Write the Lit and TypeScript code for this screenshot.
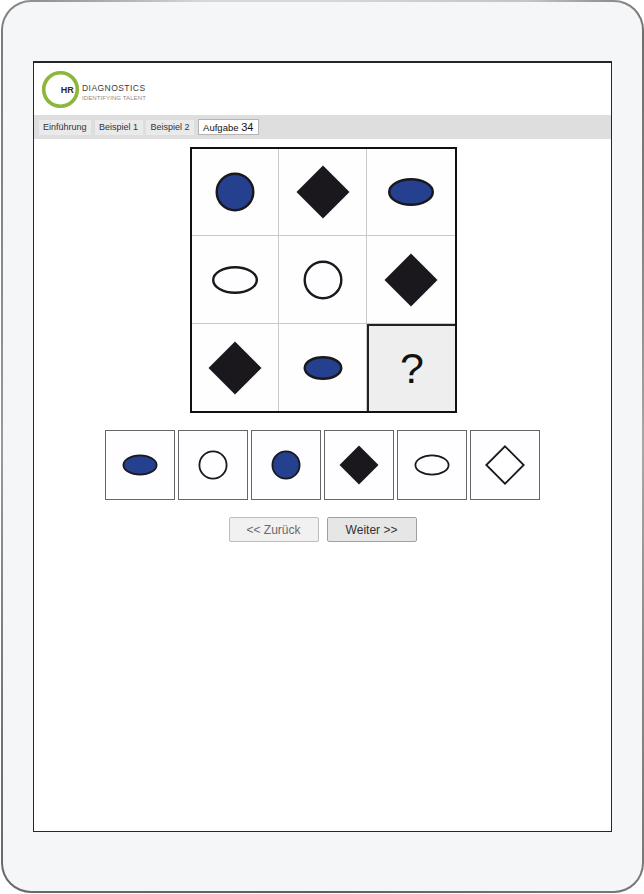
import { LitElement, html, svg, css } from "lit";
import { customElement } from "lit/decorators.js";

type Kind = "circle" | "ellipse" | "diamond";
interface Shape { kind: Kind; fill: string; a: number; b?: number; sw?: number }

const BLUE = "#24408f";
const INK = "#1a181c";
const PAPER = "#fefdff";

const draw = (s: Shape, size: number) => {
  const c = size / 2;
  const sw = s.sw ?? 2.4;
  if (s.kind === "circle")
    return svg`<circle cx=${c} cy=${c} r=${s.a - sw / 2} fill=${s.fill} stroke=${INK} stroke-width=${sw}></circle>`;
  if (s.kind === "ellipse")
    return svg`<ellipse cx=${c} cy=${c} rx=${s.a - sw / 2} ry=${(s.b ?? s.a) - sw / 2} fill=${s.fill} stroke=${INK} stroke-width=${sw}></ellipse>`;
  const h = s.a - (s.fill === INK ? 0 : sw / 1.4);
  return svg`<polygon points="${c},${c - h} ${c + h},${c} ${c},${c + h} ${c - h},${c}" fill=${s.fill} stroke=${s.fill === INK ? "none" : INK} stroke-width=${sw}></polygon>`;
};

const MATRIX: Shape[] = [
  { kind: "circle", fill: BLUE, a: 19.5 },
  { kind: "diamond", fill: INK, a: 26.5 },
  { kind: "ellipse", fill: BLUE, a: 23, b: 14 },
  { kind: "ellipse", fill: PAPER, a: 23, b: 14 },
  { kind: "circle", fill: PAPER, a: 19.5 },
  { kind: "diamond", fill: INK, a: 26.5 },
  { kind: "diamond", fill: INK, a: 26.5 },
  { kind: "ellipse", fill: BLUE, a: 19.5, b: 12 },
];

const OPTIONS: Shape[] = [
  { kind: "ellipse", fill: BLUE, a: 17.5, b: 10.5, sw: 1.8 },
  { kind: "circle", fill: PAPER, a: 14.5, sw: 1.8 },
  { kind: "circle", fill: BLUE, a: 14.5, sw: 1.8 },
  { kind: "diamond", fill: INK, a: 19.5 },
  { kind: "ellipse", fill: PAPER, a: 17.5, b: 10.5, sw: 1.8 },
  { kind: "diamond", fill: "#ffffff", a: 20, sw: 1.8 },
];

@customElement("app-root")
export class AppRoot extends LitElement {
  static styles = css`
    :host {
      display: block;
      width: 644px;
      height: 894px;
      background: #fff;
      font-family: "Liberation Sans", Arial, sans-serif;
    }
    * { box-sizing: border-box; }
    .tablet {
      width: 643px;
      height: 893px;
      margin-left: 1px;
      padding: 59px 0 0 30px;
      border: 2px solid transparent;
      border-radius: 30px;
      background:
        linear-gradient(#f5f6f8, #f5f6f8) padding-box,
        conic-gradient(#d8d8d8 0deg, #c4c4c4 25deg, #6f6f6f 38deg, #a8a8a8 90deg, #7a7a7a 142deg, #5f5f5f 180deg, #6a6a6a 218deg, #9a9a9a 270deg, #7c7c7c 322deg, #d8d8d8 345deg) border-box;
    }
    .screen {
      width: 579px;
      height: 771px;
      background: #fff;
      border: 1px solid #24282b;
      border-top-width: 2px;
      display: flex;
      flex-direction: column;
    }
    .header {
      height: 52px;
      padding: 7px 0 0 7px;
      display: flex;
      align-items: flex-start;
      flex: none;
    }
    .logo-ring { display: block; flex: none; }
    .hr { font-size: 9px; font-weight: 700; fill: #2b2b2b; }
    .logo-text {
      margin: 13px 0 0 2px;
      display: flex;
      flex-direction: column;
    }
    .brand {
      font-size: 8.5px;
      line-height: 11px;
      letter-spacing: 0.45px;
      color: #3a3a3a;
    }
    .tag {
      font-size: 6px;
      line-height: 9px;
      letter-spacing: 0.1px;
      color: #8c8c8c;
    }
    .tabs {
      height: 24px;
      flex: none;
      background: #dedede;
      display: flex;
      align-items: flex-start;
      gap: 3.5px;
      padding: 5px 0 0 4.5px;
    }
    .tab {
      height: 15px;
      padding: 0 4.5px;
      font-size: 9px;
      line-height: 15px;
      color: #333;
      background: #eaeaea;
      white-space: nowrap;
    }
    .tab.active {
      height: 16px;
      margin-top: -1px;
      background: #fff;
      border: 1px solid #b5b5b5;
      font-size: 9.5px;
      color: #111;
      line-height: 15px;
    }
    .tab .num { font-size: 11px; }
    .content {
      display: flex;
      flex-direction: column;
      align-items: center;
      padding-top: 8px;
    }
    .matrix {
      width: 267px;
      height: 266px;
      margin-left: 2px;
      border: 2px solid #111;
      display: grid;
      grid-template-columns: 87px 88px 88px;
      grid-template-rows: 87px 88px 87px;
      background: #fff;
    }
    .cell {
      display: flex;
      align-items: center;
      justify-content: center;
      border-right: 1px solid #c9c9c9;
      border-bottom: 1px solid #c9c9c9;
      background: #fefefe;
    }
    .cell:nth-child(3n) { border-right: 0; }
    .cell:nth-child(n + 7) { border-bottom: 0; }
    .cell svg { display: block; flex: none; }
    .unknown {
      background: #eeeeee;
      border: 2px solid #222;
      font-size: 43px;
      line-height: 1;
      color: #111;
    }
    .options {
      display: flex;
      gap: 3px;
      margin-top: 17px;
    }
    .option {
      width: 70px;
      height: 70px;
      background: #fefdff;
      border: 1px solid #666;
      display: flex;
      align-items: center;
      justify-content: center;
    }
    .option svg { display: block; flex: none; }
    .nav {
      display: flex;
      gap: 8px;
      margin-top: 17px;
    }
    .btn {
      width: 90px;
      height: 25px;
      padding: 0;
      font: 12px "Liberation Sans", Arial, sans-serif;
      border-radius: 2px;
      cursor: pointer;
    }
    .back {
      color: #6a6a6a;
      background: #f1f1f1;
      border: 1px solid #bdbdbd;
    }
    .next {
      color: #333;
      background: #e6e6e6;
      border: 1px solid #a0a0a0;
    }
  `;

  render() {
    return html`
      <div class="tablet">
        <div class="screen">
          <div class="header">
            <svg class="logo-ring" width="39" height="39" viewBox="0 0 39 39">
              <circle cx="19.5" cy="19.5" r="16.8" fill="none" stroke="#8cb63c" stroke-width="3.6"></circle>
              <text class="hr" x="19.7" y="23">HR</text>
            </svg>
            <div class="logo-text">
              <span class="brand">DIAGNOSTICS</span>
              <span class="tag">IDENTIFYING TALENT</span>
            </div>
          </div>
          <div class="tabs">
            <div class="tab">Einführung</div>
            <div class="tab">Beispiel 1</div>
            <div class="tab">Beispiel 2</div>
            <div class="tab active">Aufgabe <span class="num">34</span></div>
          </div>
          <div class="content">
            <div class="matrix">
              ${MATRIX.map(
                (s) => html`<div class="cell"><svg width="60" height="60" viewBox="0 0 60 60">${draw(s, 60)}</svg></div>`
              )}
              <div class="cell unknown">?</div>
            </div>
            <div class="options">
              ${OPTIONS.map(
                (s) => html`<div class="option"><svg width="44" height="44" viewBox="0 0 44 44">${draw(s, 44)}</svg></div>`
              )}
            </div>
            <div class="nav">
              <button class="btn back">&lt;&lt; Zurück</button>
              <button class="btn next">Weiter &gt;&gt;</button>
            </div>
          </div>
        </div>
      </div>
    `;
  }
}
